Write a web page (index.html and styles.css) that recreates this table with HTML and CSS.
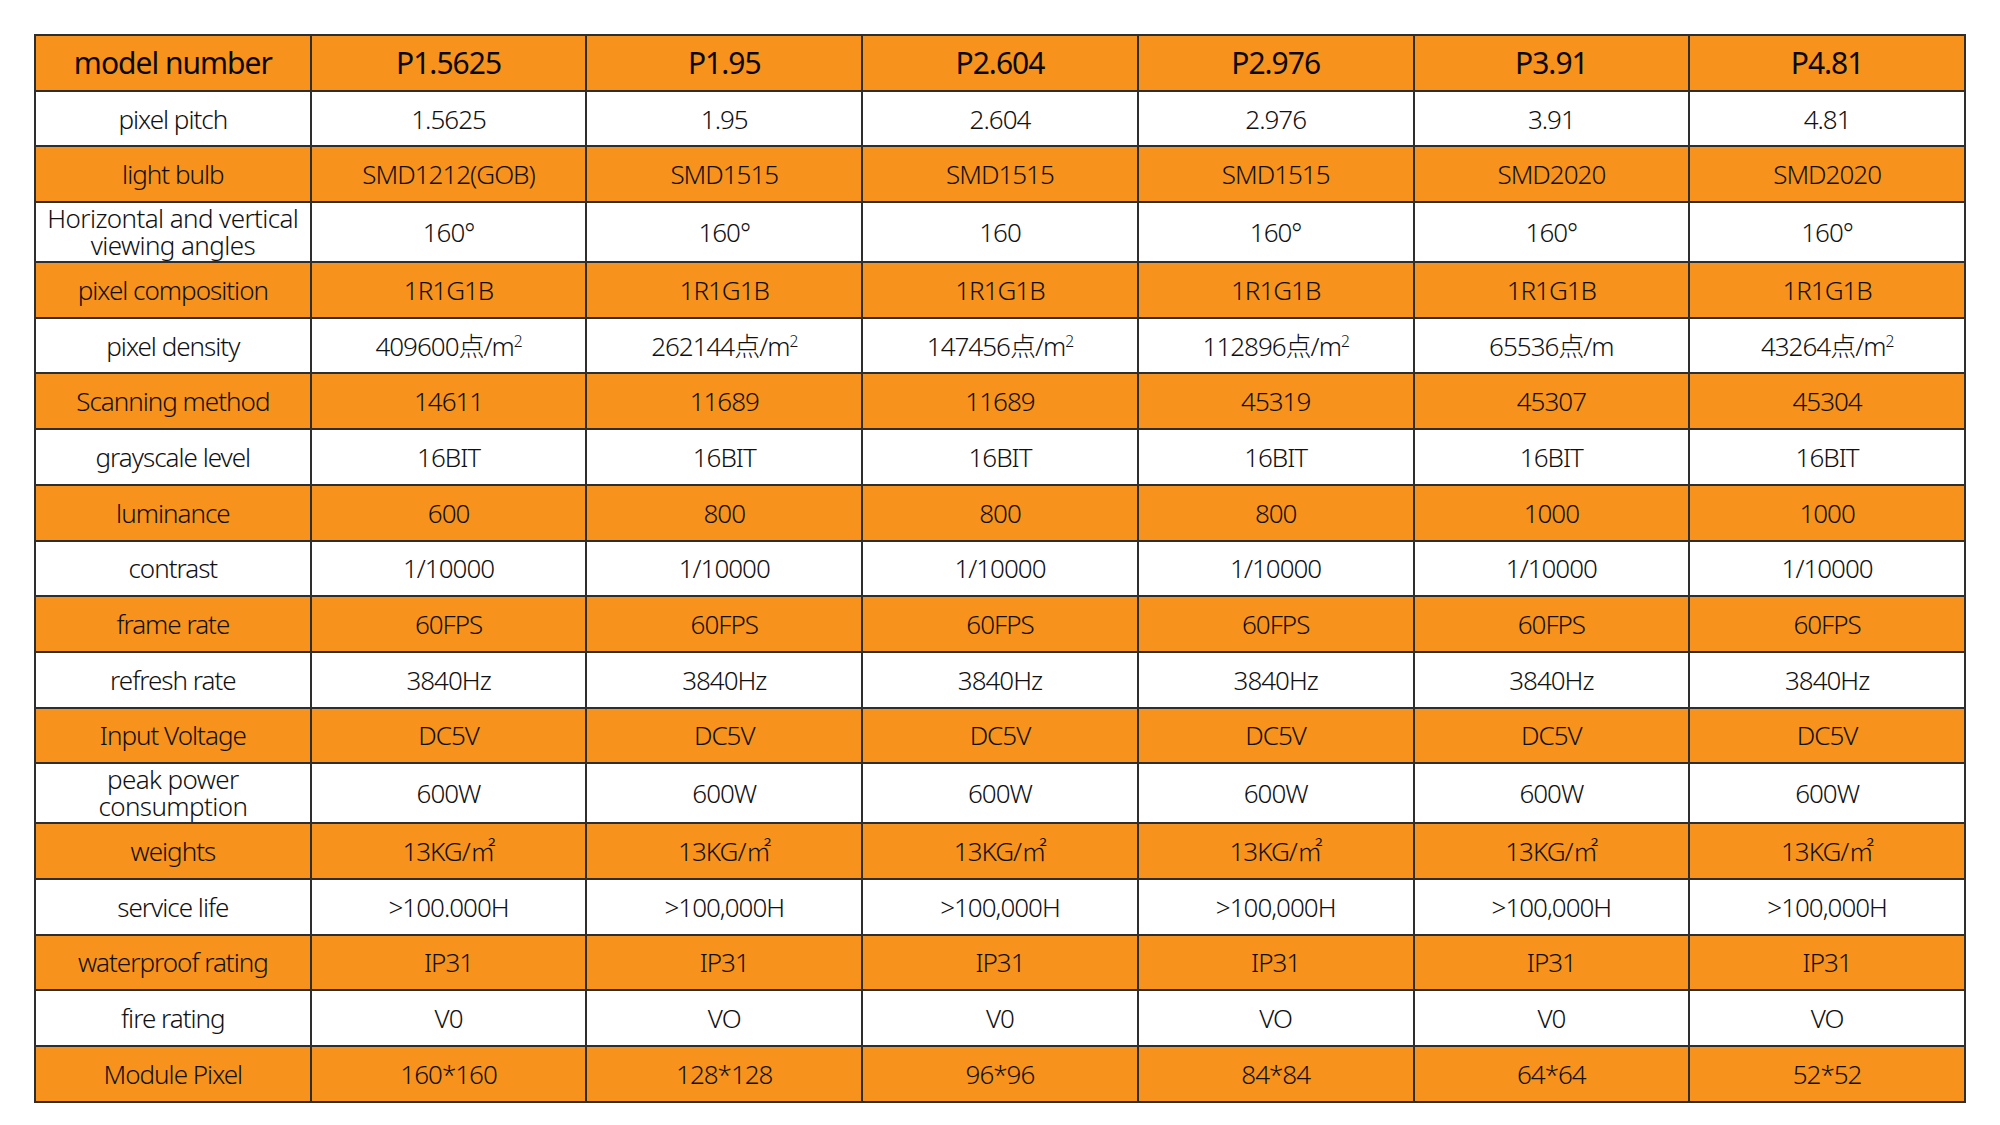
FILE: index.html
```html
<!DOCTYPE html>
<html lang="en">
<head>
<meta charset="utf-8">
<title>Specifications</title>
<link rel="stylesheet" href="styles.css">
</head>
<body>
<table class="spec">
  <colgroup>
    <col><col><col><col><col><col><col>
  </colgroup>
  <tbody>
    <tr class="row head orange"><td>model number</td><td>P1.5625</td><td>P1.95</td><td>P2.604</td><td>P2.976</td><td>P3.91</td><td>P4.81</td></tr>
    <tr class="row white"><td>pixel pitch</td><td>1.5625</td><td>1.95</td><td>2.604</td><td>2.976</td><td>3.91</td><td>4.81</td></tr>
    <tr class="row orange"><td>light bulb</td><td>SMD1212(GOB)</td><td>SMD1515</td><td>SMD1515</td><td>SMD1515</td><td>SMD2020</td><td>SMD2020</td></tr>
    <tr class="row tall white"><td class="two">Horizontal and vertical viewing angles</td><td>160°</td><td>160°</td><td>160</td><td>160°</td><td>160°</td><td>160°</td></tr>
    <tr class="row orange"><td>pixel composition</td><td>1R1G1B</td><td>1R1G1B</td><td>1R1G1B</td><td>1R1G1B</td><td>1R1G1B</td><td>1R1G1B</td></tr>
    <tr class="row white"><td>pixel density</td><td>409600点/m<sup>2</sup></td><td>262144点/m<sup>2</sup></td><td>147456点/m<sup>2</sup></td><td>112896点/m<sup>2</sup></td><td>65536点/m</td><td>43264点/m<sup>2</sup></td></tr>
    <tr class="row orange"><td>Scanning method</td><td>14611</td><td>11689</td><td>11689</td><td>45319</td><td>45307</td><td>45304</td></tr>
    <tr class="row white"><td>grayscale level</td><td>16BIT</td><td>16BIT</td><td>16BIT</td><td>16BIT</td><td>16BIT</td><td>16BIT</td></tr>
    <tr class="row orange"><td>luminance</td><td>600</td><td>800</td><td>800</td><td>800</td><td>1000</td><td>1000</td></tr>
    <tr class="row white"><td>contrast</td><td>1/10000</td><td>1/10000</td><td>1/10000</td><td>1/10000</td><td>1/10000</td><td>1/10000</td></tr>
    <tr class="row orange"><td>frame rate</td><td>60FPS</td><td>60FPS</td><td>60FPS</td><td>60FPS</td><td>60FPS</td><td>60FPS</td></tr>
    <tr class="row white"><td>refresh rate</td><td>3840Hz</td><td>3840Hz</td><td>3840Hz</td><td>3840Hz</td><td>3840Hz</td><td>3840Hz</td></tr>
    <tr class="row orange"><td>Input Voltage</td><td>DC5V</td><td>DC5V</td><td>DC5V</td><td>DC5V</td><td>DC5V</td><td>DC5V</td></tr>
    <tr class="row tall white"><td class="two">peak power consumption</td><td>600W</td><td>600W</td><td>600W</td><td>600W</td><td>600W</td><td>600W</td></tr>
    <tr class="row orange"><td>weights</td><td>13KG/㎡</td><td>13KG/㎡</td><td>13KG/㎡</td><td>13KG/㎡</td><td>13KG/㎡</td><td>13KG/㎡</td></tr>
    <tr class="row white"><td>service life</td><td>&gt;100.000H</td><td>&gt;100,000H</td><td>&gt;100,000H</td><td>&gt;100,000H</td><td>&gt;100,000H</td><td>&gt;100,000H</td></tr>
    <tr class="row orange"><td>waterproof rating</td><td>IP31</td><td>IP31</td><td>IP31</td><td>IP31</td><td>IP31</td><td>IP31</td></tr>
    <tr class="row white"><td>fire rating</td><td>V0</td><td>VO</td><td>V0</td><td>VO</td><td>V0</td><td>VO</td></tr>
    <tr class="row orange"><td>Module Pixel</td><td>160*160</td><td>128*128</td><td>96*96</td><td>84*84</td><td>64*64</td><td>52*52</td></tr>
  </tbody>
</table>
</body>
</html>
```

FILE: styles.css
```css
html, body {
  margin: 0;
  padding: 0;
  background: #ffffff;
}

body {
  padding: 34px 0 0 34px;
}

.spec {
  width: 1932px;
  table-layout: fixed;
  border-collapse: collapse;
  font-family: "Noto Sans", "Open Sans", "Noto Sans CJK SC", sans-serif;
  font-weight: 300;
  font-size: 26px;
  letter-spacing: -1px;
  color: #111111;
}

.spec td {
  border: 2px solid #2e2e2e;
  padding: 0;
  text-align: center;
  vertical-align: middle;
  line-height: 1;
  white-space: nowrap;
}

.spec td.two {
  white-space: normal;
  line-height: 27px;
  letter-spacing: -0.6px;
}

.row {
  height: 55.7px;
}

.row.tall {
  height: 60px;
}

.orange td {
  background: #f7921d;
}

.white td {
  background: #ffffff;
}

.head td {
  font-size: 30px;
  font-weight: 400;
  letter-spacing: -1px;
  color: #0a0a0a;
}

.spec sup {
  font-size: 0.6em;
  line-height: 0;
  vertical-align: 0.6em;
}
```
